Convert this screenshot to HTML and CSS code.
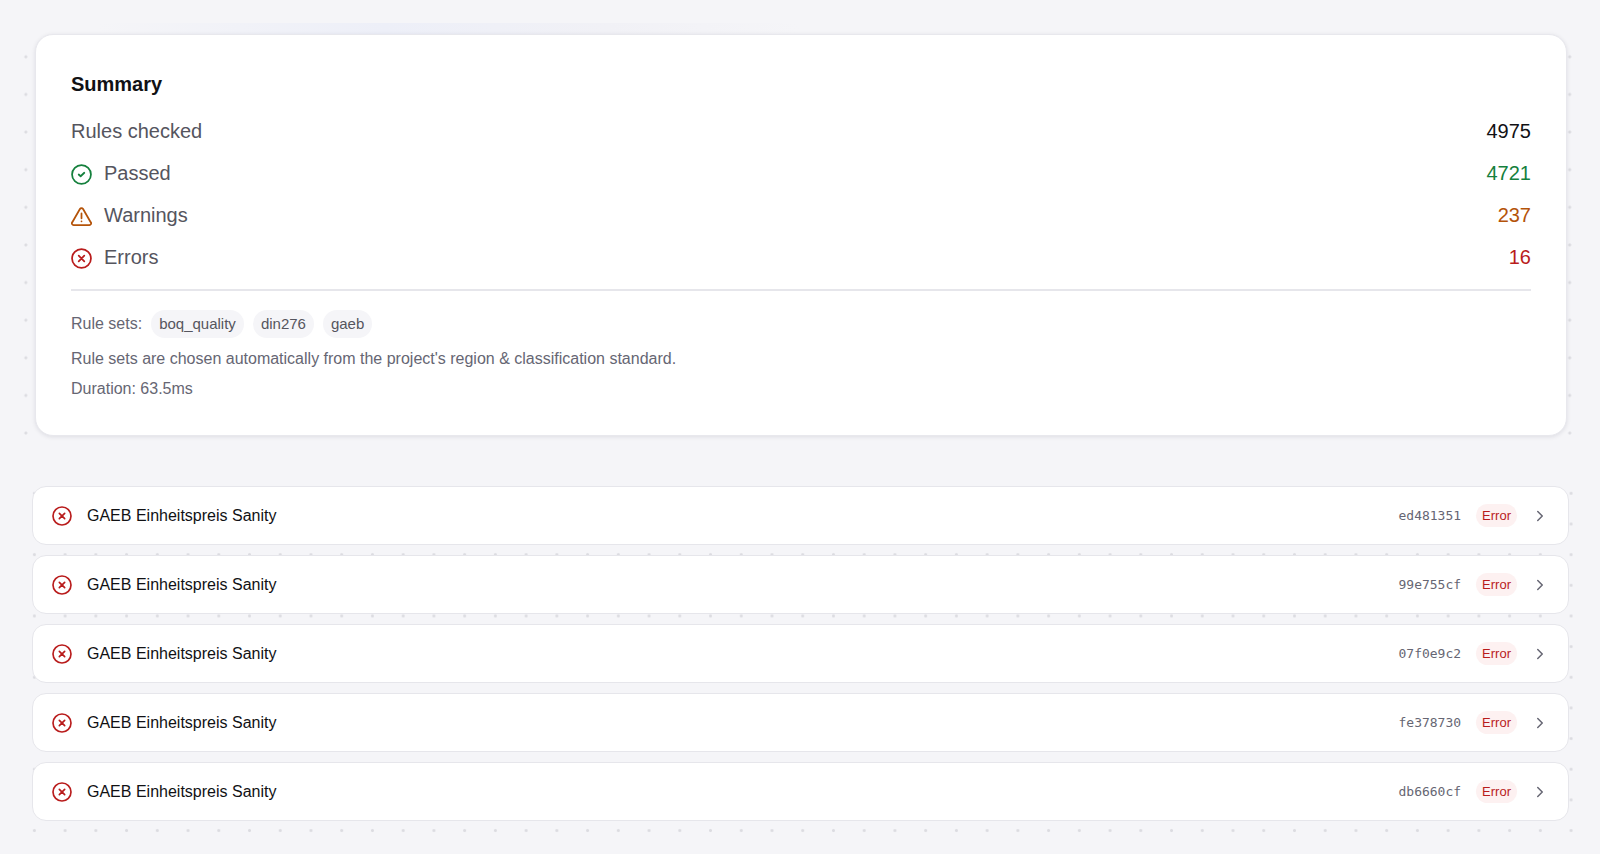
FILE: index.html
```
<!DOCTYPE html>
<html lang="en">
<head>
   <meta charset="UTF-8" />
   <meta name="viewport" content="width=device-width, initial-scale=1.0"/>
   <title>Validation Summary</title>
   <link rel="stylesheet" href="styles.css">
</head>
<body>

   <svg class="sprite" aria-hidden="true">
      <symbol id="icon-check" viewBox="0 0 24 24">
         <circle cx="12" cy="12" r="10.8"/>
         <path d="M8.800 12l2.200 2 4.200-4"/>
      </symbol>
      <symbol id="icon-warning" viewBox="0 0 24 24">
         <path d="M22.500 18.500l-8.700-15a2.100 2.100 0 0 0-3.600 0l-8.700 15A2 2 0 0 0 3.300 21.800h17.400a2 2 0 0 0 1.800-3.300"/>
         <path d="M12 8.500v5.500M12 17.500h.01"/>
      </symbol>
      <symbol id="icon-error" viewBox="0 0 24 24">
         <circle cx="12" cy="12" r="10.8"/>
         <path d="M15.200 8.800l-6.400 6.400M8.800 8.800l6.400 6.400"/>
      </symbol>
      <symbol id="icon-chevron" viewBox="0 0 24 24">
         <path d="M9 18l6-6-6-6"/>
      </symbol>
   </svg>

   <section class="summary-area">
      <div class="card">
         <h2>Summary</h2>
         <dl class="stats">
            <div class="stat">
               <dt>Rules checked</dt>
               <dd>4975</dd>
            </div>
            <div class="stat passed">
               <dt><svg class="icon"><use href="#icon-check"/></svg>Passed</dt>
               <dd>4721</dd>
            </div>
            <div class="stat warnings">
               <dt><svg class="icon"><use href="#icon-warning"/></svg>Warnings</dt>
               <dd>237</dd>
            </div>
            <div class="stat errors">
               <dt><svg class="icon"><use href="#icon-error"/></svg>Errors</dt>
               <dd>16</dd>
            </div>
         </dl>
         <div class="details">
            <div class="rule-sets">
               <span>Rule sets:</span>
               <span class="chip">boq_quality</span>
               <span class="chip">din276</span>
               <span class="chip">gaeb</span>
            </div>
            <p>Rule sets are chosen automatically from the project's region &amp; classification standard.</p>
            <p>Duration: 63.5ms</p>
         </div>
      </div>
   </section>

   <section class="results-area">
      <div class="results">
         <button class="result" type="button">
            <svg class="icon"><use href="#icon-error"/></svg>
            <span class="result-name">GAEB Einheitspreis Sanity</span>
            <span class="result-id">ed481351</span>
            <span class="badge">Error</span>
            <svg class="chevron"><use href="#icon-chevron"/></svg>
         </button>
         <button class="result" type="button">
            <svg class="icon"><use href="#icon-error"/></svg>
            <span class="result-name">GAEB Einheitspreis Sanity</span>
            <span class="result-id">99e755cf</span>
            <span class="badge">Error</span>
            <svg class="chevron"><use href="#icon-chevron"/></svg>
         </button>
         <button class="result" type="button">
            <svg class="icon"><use href="#icon-error"/></svg>
            <span class="result-name">GAEB Einheitspreis Sanity</span>
            <span class="result-id">07f0e9c2</span>
            <span class="badge">Error</span>
            <svg class="chevron"><use href="#icon-chevron"/></svg>
         </button>
         <button class="result" type="button">
            <svg class="icon"><use href="#icon-error"/></svg>
            <span class="result-name">GAEB Einheitspreis Sanity</span>
            <span class="result-id">fe378730</span>
            <span class="badge">Error</span>
            <svg class="chevron"><use href="#icon-chevron"/></svg>
         </button>
         <button class="result" type="button">
            <svg class="icon"><use href="#icon-error"/></svg>
            <span class="result-name">GAEB Einheitspreis Sanity</span>
            <span class="result-id">db6660cf</span>
            <span class="badge">Error</span>
            <svg class="chevron"><use href="#icon-chevron"/></svg>
         </button>
      </div>
   </section>

</body>
</html>
```
FILE: styles.css
```
* {
   margin: 0;
   padding: 0;
   box-sizing: border-box;
}
body {
   background-color: #f5f5f8;
   color: #111114;
   font-family: "Liberation Sans", Arial, sans-serif;
}
.sprite {
   display: none;
}
svg {
   fill: none;
   stroke: currentColor;
   stroke-width: 2;
   stroke-linecap: round;
   stroke-linejoin: round;
   flex-shrink: 0;
}

/* dotted backdrop behind both sections */
.summary-area, .results-area {
   position: relative;
   z-index: 0;
}
.summary-area::before, .results-area::before {
   content: "";
   position: absolute;
   z-index: -1;
   background-image: radial-gradient(circle, #dcdce1 1px, transparent 2px);
}
.summary-area::before {
   inset: 38px 11px 0 7px;
   background-size: 38px 38px;
   background-repeat: round;
}
.results-area::before {
   inset: 26px 13px 7px 19px;
   background-size: 31px 31px;
   background-repeat: round;
}

.summary-area {
   padding: 34px 33px 16px 35px;
   background: linear-gradient(90deg, transparent 6%, #edeff8 24%, #f1f1f6 38%, transparent 50%) 0 23px / 100% 12px no-repeat;
}
.card {
   padding: 34px 35px 31px;
   background-color: #fff;
   border: 1px solid #e8e8ed;
   border-radius: 18px;
   box-shadow: 0 1px 4px rgba(20, 20, 50, 0.1);
}
.card h2 {
   font-size: 20px;
   line-height: 30px;
}
.stats {
   margin-top: 11px;
   padding-bottom: 11px;
   border-bottom: 2px solid #e6e6eb;
   font-size: 20px;
   line-height: 42px;
}
.stat {
   display: flex;
   justify-content: space-between;
}
.stat dt {
   display: flex;
   align-items: center;
   gap: 12px;
   color: #55555e;
}
.icon {
   width: 21px;
   height: 21px;
   overflow: visible;
}
.stat .icon {
   margin-top: 2px;
}
.passed .icon, .passed dd {
   color: #15803d;
}
.warnings .icon, .warnings dd {
   color: #b45309;
}
.errors .icon, .errors dd {
   color: #b91c1c;
}
.details {
   padding-top: 18px;
   color: #666673;
   font-size: 16px;
   line-height: 30px;
}
.rule-sets {
   display: flex;
   align-items: center;
   gap: 9px;
   margin-bottom: 5px;
}
.chip {
   padding: 0 8px;
   background-color: #f5f5f8;
   border-radius: 14px;
   color: #55555e;
   font-size: 15px;
   line-height: 28px;
}

.results-area {
   padding: 34px 31px 32px 32px;
}
.results {
   display: flex;
   flex-direction: column;
   gap: 10px;
}
.result {
   display: flex;
   align-items: center;
   width: 100%;
   padding: 17px 19px;
   background-color: #fff;
   border: 1px solid #e6e6eb;
   border-radius: 14px;
   color: inherit;
   font-family: inherit;
   font-size: 16px;
   line-height: 23px;
   text-align: left;
   cursor: pointer;
}
.result .icon {
   width: 20px;
   height: 20px;
   color: #b91c1c;
}
.result-name {
   flex: 1;
   margin-left: 15px;
}
.result-id {
   color: #666673;
   font-family: "DejaVu Sans Mono", monospace;
   font-size: 13px;
}
.badge {
   margin: 0 14px 0 15px;
   padding: 0 6px;
   background-color: #fdf1f1;
   border-radius: 12px;
   color: #b91c1c;
   font-size: 13px;
   line-height: 23px;
}
.chevron {
   width: 18px;
   height: 18px;
   color: #666673;
}
```
